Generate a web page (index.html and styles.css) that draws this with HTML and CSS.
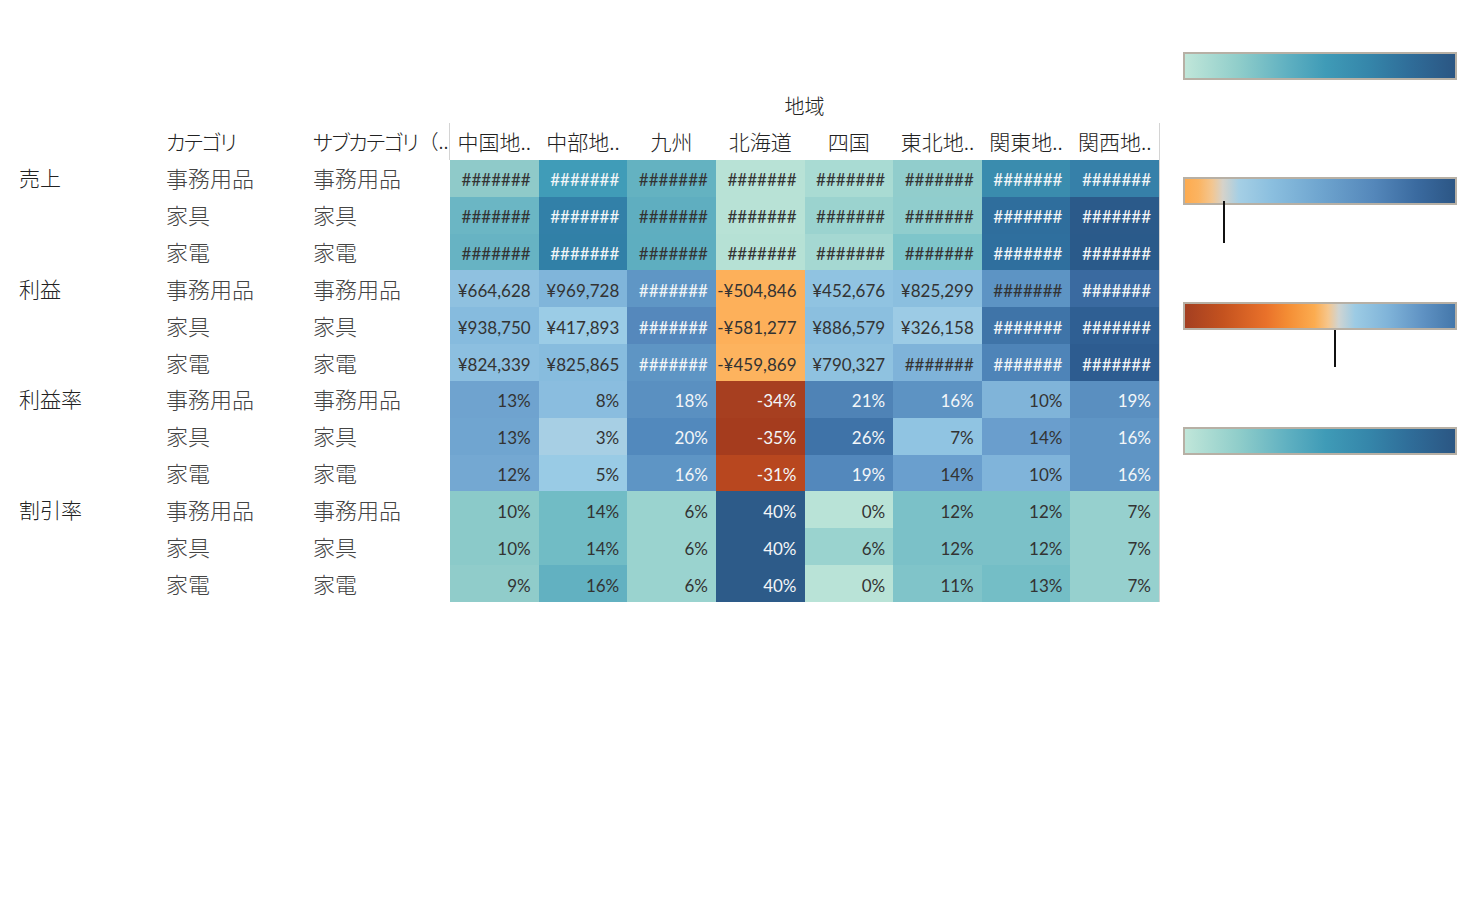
FILE: index.html
```html
<!DOCTYPE html>
<html lang="ja">
<head>
<meta charset="utf-8">
<title>地域別 売上・利益</title>
<link rel="stylesheet" href="styles.css">
</head>
<body>
<div class="page">
  <div class="viz">
    <div class="e"></div><div class="e"></div><div class="e"></div>
    <div class="region-title">地域</div>

    <div class="e"></div>
    <div class="hdr lab"><span class="kana">カテゴリ</span></div>
    <div class="hdr lab"><span class="kana">サブカテゴリ</span><span class="paren">（..</span></div>
    <div class="hdr col first">中国地..</div>
    <div class="hdr col">中部地..</div>
    <div class="hdr col">九州</div>
    <div class="hdr col">北海道</div>
    <div class="hdr col">四国</div>
    <div class="hdr col">東北地..</div>
    <div class="hdr col">関東地..</div>
    <div class="hdr col last">関西地..</div>

    <!-- 売上 -->
    <div class="measure">売上</div><div class="cat">事務用品</div><div class="cat">事務用品</div>
    <div class="c d" style="background:#8fcac9">#######</div>
    <div class="c w" style="background:#409cb8">#######</div>
    <div class="c d" style="background:#64b2c1">#######</div>
    <div class="c d" style="background:#b8e2d6">#######</div>
    <div class="c d" style="background:#a9dbd3">#######</div>
    <div class="c d" style="background:#91cdcc">#######</div>
    <div class="c w" style="background:#3a8cae">#######</div>
    <div class="c w last" style="background:#3680a9">#######</div>

    <div class="e"></div><div class="cat">家具</div><div class="cat">家具</div>
    <div class="c d" style="background:#6bb6c4">#######</div>
    <div class="c w" style="background:#3280a8">#######</div>
    <div class="c d" style="background:#5faec0">#######</div>
    <div class="c d" style="background:#b8e2d6">#######</div>
    <div class="c d" style="background:#9bd3cf">#######</div>
    <div class="c d" style="background:#90cdcd">#######</div>
    <div class="c w" style="background:#2f6e9d">#######</div>
    <div class="c w last" style="background:#2b5a8a">#######</div>

    <div class="e"></div><div class="cat">家電</div><div class="cat">家電</div>
    <div class="c d" style="background:#67b3c3">#######</div>
    <div class="c w" style="background:#3180a7">#######</div>
    <div class="c d" style="background:#5eaec0">#######</div>
    <div class="c d" style="background:#b6e1d5">#######</div>
    <div class="c d" style="background:#a5d8d2">#######</div>
    <div class="c d" style="background:#7ec5ca">#######</div>
    <div class="c w" style="background:#2f6f9e">#######</div>
    <div class="c w last" style="background:#2a5a8a">#######</div>

    <!-- 利益 -->
    <div class="measure">利益</div><div class="cat">事務用品</div><div class="cat">事務用品</div>
    <div class="c d" style="background:#8fc1e0">¥664,628</div>
    <div class="c d" style="background:#80b5da">¥969,728</div>
    <div class="c w" style="background:#5f96c5">#######</div>
    <div class="c d" style="background:#fdb05a">-¥504,846</div>
    <div class="c d" style="background:#90c3e1">¥452,676</div>
    <div class="c d" style="background:#8bbfdf">¥825,299</div>
    <div class="c d" style="background:#5d94c4">#######</div>
    <div class="c w last" style="background:#3a6aa0">#######</div>

    <div class="e"></div><div class="cat">家具</div><div class="cat">家具</div>
    <div class="c d" style="background:#86bbde">¥938,750</div>
    <div class="c d" style="background:#9bcce6">¥417,893</div>
    <div class="c w" style="background:#5588bc">#######</div>
    <div class="c d" style="background:#fdb05a">-¥581,277</div>
    <div class="c d" style="background:#8bbfdf">¥886,579</div>
    <div class="c d" style="background:#9ccbe5">¥326,158</div>
    <div class="c w" style="background:#3f74a8">#######</div>
    <div class="c w last" style="background:#2f5f93">#######</div>

    <div class="e"></div><div class="cat">家電</div><div class="cat">家電</div>
    <div class="c d" style="background:#8cbfe0">¥824,339</div>
    <div class="c d" style="background:#87bcde">¥825,865</div>
    <div class="c w" style="background:#5e95c4">#######</div>
    <div class="c d" style="background:#fdb35e">-¥459,869</div>
    <div class="c d" style="background:#8fc2e0">¥790,327</div>
    <div class="c d" style="background:#7fb3d9">#######</div>
    <div class="c w" style="background:#4e84b8">#######</div>
    <div class="c w last" style="background:#2d5c90">#######</div>

    <!-- 利益率 -->
    <div class="measure">利益率</div><div class="cat">事務用品</div><div class="cat">事務用品</div>
    <div class="c d" style="background:#6fa3cf">13%</div>
    <div class="c d" style="background:#8abddf">8%</div>
    <div class="c w" style="background:#5a90c1">18%</div>
    <div class="c w" style="background:#a73f20">-34%</div>
    <div class="c w" style="background:#4f83b6">21%</div>
    <div class="c w" style="background:#5d93c3">16%</div>
    <div class="c d" style="background:#80b4d9">10%</div>
    <div class="c w last" style="background:#5a8fc0">19%</div>

    <div class="e"></div><div class="cat">家具</div><div class="cat">家具</div>
    <div class="c d" style="background:#70a5d0">13%</div>
    <div class="c d" style="background:#a7cfe4">3%</div>
    <div class="c w" style="background:#5289bd">20%</div>
    <div class="c w" style="background:#a53c1e">-35%</div>
    <div class="c w" style="background:#3f73a8">26%</div>
    <div class="c d" style="background:#90c4e2">7%</div>
    <div class="c d" style="background:#6a9ecd">14%</div>
    <div class="c w last" style="background:#5f95c5">16%</div>

    <div class="e"></div><div class="cat">家電</div><div class="cat">家電</div>
    <div class="c d" style="background:#74a8d2">12%</div>
    <div class="c d" style="background:#99cbe5">5%</div>
    <div class="c w" style="background:#5e95c5">16%</div>
    <div class="c w" style="background:#b8471f">-31%</div>
    <div class="c w" style="background:#5388bc">19%</div>
    <div class="c d" style="background:#6a9fce">14%</div>
    <div class="c d" style="background:#80b4da">10%</div>
    <div class="c w last" style="background:#5f95c5">16%</div>

    <!-- 割引率 -->
    <div class="measure">割引率</div><div class="cat">事務用品</div><div class="cat">事務用品</div>
    <div class="c d" style="background:#8bcac9">10%</div>
    <div class="c d" style="background:#71bcc5">14%</div>
    <div class="c d" style="background:#9ad3cf">6%</div>
    <div class="c w" style="background:#2d5b89">40%</div>
    <div class="c d" style="background:#b9e3d7">0%</div>
    <div class="c d" style="background:#7bc1c8">12%</div>
    <div class="c d" style="background:#7bc1c8">12%</div>
    <div class="c d last" style="background:#96d0ce">7%</div>

    <div class="e"></div><div class="cat">家具</div><div class="cat">家具</div>
    <div class="c d" style="background:#8bcac9">10%</div>
    <div class="c d" style="background:#71bcc5">14%</div>
    <div class="c d" style="background:#9ad3cf">6%</div>
    <div class="c w" style="background:#2d5b89">40%</div>
    <div class="c d" style="background:#9ad3cf">6%</div>
    <div class="c d" style="background:#7bc1c8">12%</div>
    <div class="c d" style="background:#7bc1c8">12%</div>
    <div class="c d last" style="background:#96d0ce">7%</div>

    <div class="e"></div><div class="cat">家電</div><div class="cat">家電</div>
    <div class="c d" style="background:#90ccca">9%</div>
    <div class="c d" style="background:#62b1c1">16%</div>
    <div class="c d" style="background:#9ad3cf">6%</div>
    <div class="c w" style="background:#2d5b89">40%</div>
    <div class="c d" style="background:#b9e3d7">0%</div>
    <div class="c d" style="background:#80c4c9">11%</div>
    <div class="c d" style="background:#74bec6">13%</div>
    <div class="c d last" style="background:#96d0ce">7%</div>
  </div>

  <div class="legends">
    <div class="legend"><div class="bar teal"></div></div>
    <div class="legend"><div class="bar profit"></div><div class="tick tick-profit"></div></div>
    <div class="legend"><div class="bar rate"></div><div class="tick tick-rate"></div></div>
    <div class="legend"><div class="bar teal"></div></div>
  </div>
</div>
</body>
</html>
```

FILE: styles.css
```css
html, body {
  margin: 0;
  padding: 0;
  background: #ffffff;
}

body {
  font-family: "Noto Sans CJK JP", "Noto Sans", sans-serif;
  color: #333333;
}

.page {
  display: flex;
  align-items: flex-start;
  gap: 24px;
}

.viz {
  display: grid;
  grid-template-columns: 166px 147px 137px repeat(8, 88.625px);
  grid-template-rows: 35px 37px repeat(12, 36.833px);
  padding-top: 88px;
}

.region-title {
  grid-column: 4 / span 8;
  text-align: center;
  font-size: 20px;
  font-weight: 300;
  line-height: 35px;
  color: #222222;
}

.hdr {
  display: flex;
  align-items: center;
  padding-bottom: 2px;
  font-size: 21px;
  font-weight: 300;
  color: #222222;
  white-space: nowrap;
}

.kana {
  font-feature-settings: "palt";
  letter-spacing: -1.5px;
}

.paren {
  font-size: 20px;
  margin-left: 1px;
}

.hdr.col {
  justify-content: center;
  overflow: visible;
}

.hdr.col.first {
  border-left: 1px solid #d4d4d4;
  margin-left: -1px;
}

.measure {
  display: flex;
  align-items: center;
  padding-left: 19px;
  padding-bottom: 2px;
  font-size: 21px;
  font-weight: 300;
  color: #222222;
}

.cat {
  display: flex;
  align-items: center;
  padding-bottom: 2px;
  font-size: 22px;
  font-weight: 300;
  color: #444444;
  white-space: nowrap;
}

.c {
  display: flex;
  align-items: center;
  justify-content: flex-end;
  padding-right: 8px;
  padding-top: 3px;
  font-family: Lato, "Noto Sans", sans-serif;
  font-size: 17px;
  white-space: nowrap;
  overflow: hidden;
}

.c.d {
  color: #333333;
}

.c.w {
  color: #f3f6f8;
}

.last {
  box-shadow: 1px 0 0 #d4d4d4;
}

.legends {
  display: flex;
  flex-direction: column;
  padding-top: 52px;
  width: 274px;
}

.legend {
  position: relative;
  height: 125px;
}

.bar {
  height: 24px;
  border: 2px solid #b7b0a5;
}

.teal {
  background: linear-gradient(to right, #c0e6d9 0%, #8fcdca 20%, #5fb0c1 38%, #3f9bb7 52%, #3586aa 68%, #2f6c98 84%, #2b5683 100%);
}

.profit {
  background: linear-gradient(to right, #feab4f 0%, #fbb462 5%, #f3c690 10%, #d6d2c9 14%, #a5cfe5 20%, #8bbfdf 32%, #6fa5cf 50%, #5487ba 70%, #3a6a9f 86%, #2c5685 100%);
}

.rate {
  background: linear-gradient(to right, #a43f21 0%, #c4521f 14%, #e9712a 30%, #f48d34 38%, #fcac50 48%, #f6c68c 53%, #cfd4d2 57%, #9ccbe4 63%, #80b4d9 75%, #5f92c3 88%, #4477aa 100%);
}

.tick {
  position: absolute;
  width: 2px;
  background: #111111;
}

.tick-profit {
  left: 40px;
  top: 24px;
  height: 42px;
}

.tick-rate {
  left: 151px;
  top: 28px;
  height: 37px;
}
```
